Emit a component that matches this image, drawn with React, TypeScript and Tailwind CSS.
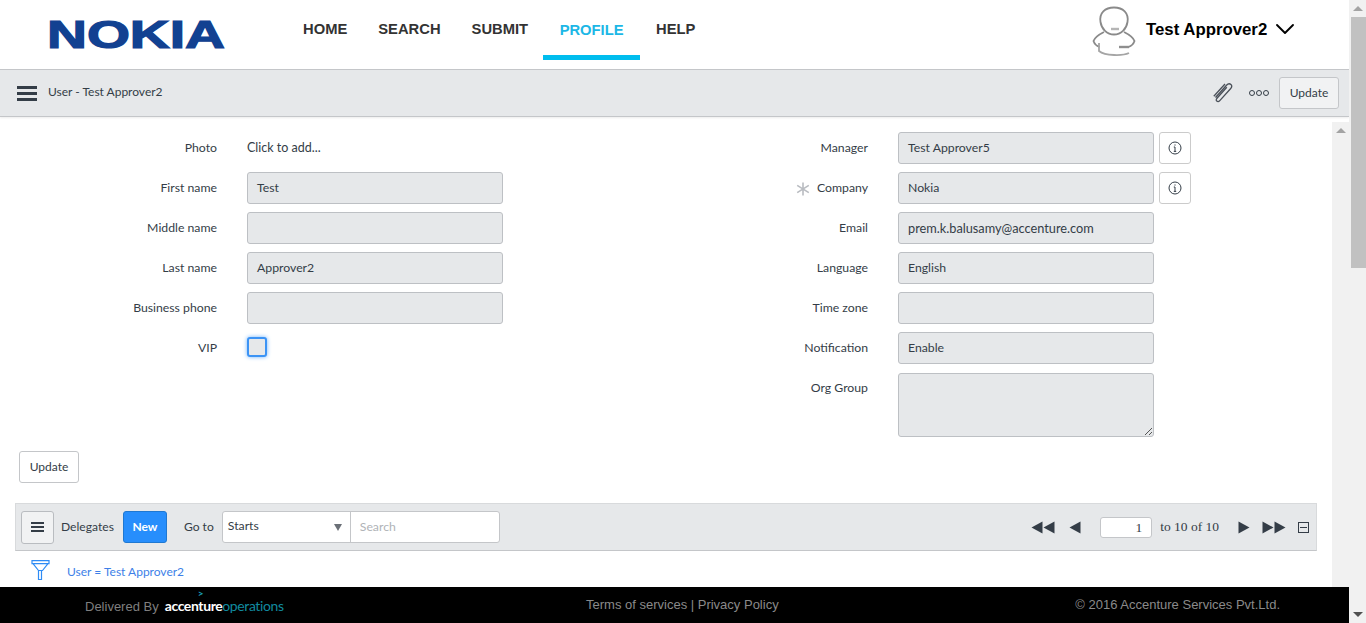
import { ChevronDown } from 'lucide-react';

const labelFont = "font-['Lato',sans-serif]";

const Field = ({ label, value, required, wide }: { label: string; value?: string; required?: boolean; wide?: boolean }) => (
  <div className="flex h-8 items-center mb-2">
    <div className="w-[121px] shrink-0 flex justify-end items-center text-[12.25px] text-[#343d47]">
      {required && (
        <svg width="14" height="14" viewBox="0 0 14 14" className="mr-[7px] mt-[1px]" stroke="#b9bcc1" strokeWidth="1.6">
          <path d="M7 0.5v13M1.2 3.4l11.6 7.2M12.8 3.4 1.2 10.6" />
        </svg>
      )}
      {label}
    </div>
    <div className={`ml-[30px] w-[256px] h-8 shrink-0 rounded-[3px] border border-[#bdc0c4] bg-[#e6e8ea] px-[9px] pt-[1px] flex items-center text-[#343d47] ${wide ? 'text-[12.75px]' : 'text-[12.25px]'}`}>
      {value}
    </div>
  </div>
);

const InfoButton = () => (
  <div className="ml-[5px] w-8 h-8 shrink-0 rounded-[3px] border border-[#cbcbcb] bg-white flex items-center justify-center">
    <svg width="14" height="14" viewBox="0 0 14 14" fill="none" stroke="#343d47" strokeWidth="1">
      <circle cx="7" cy="7" r="6" />
      <path d="M7 6v4.2M5.8 10.4h2.4M5.8 6h1.2" />
      <path d="M7 3.4v1.2" />
    </svg>
  </div>
);

const Triangle = ({ dir }: { dir: 'left' | 'right' }) => (
  <svg width="12" height="13" viewBox="0 0 12 13" fill="#343d47">
    <path d={dir === 'left' ? 'M0.5 6.5L11.5 0.5V12.5Z' : 'M11.5 6.5L0.5 0.5V12.5Z'} />
  </svg>
);

export default function App() {
  return (
    <div className={`relative flex h-[623px] w-[1366px] overflow-hidden bg-white ${labelFont}`}>
      <div className="flex w-[1349px] flex-col">
        {/* Header */}
        <div className="h-[69px] flex items-start relative bg-white">
          <svg width="180" height="50" viewBox="0 0 180 50" className="ml-[47px] mt-[6px]">
            <text
              x="0"
              y="41.5"
              textLength="178"
              lengthAdjust="spacingAndGlyphs"
              fontFamily="Liberation Sans, sans-serif"
              fontWeight="700"
              fontSize="38"
              fill="#124191"
              stroke="#124191"
              strokeWidth="1.2"
            >
              NOKIA
            </text>
          </svg>
          <nav className="ml-[59px] flex font-['Liberation_Sans',sans-serif] font-bold text-[14.75px] text-[#333]">
            <a className="h-[60px] pl-[17px] pr-[15px] pt-[18px]">HOME</a>
            <a className="h-[60px] pl-[16px] pr-[15.5px] pt-[18px]">SEARCH</a>
            <a className="h-[60px] pl-[15.5px] pr-[15px] pt-[18px]">SUBMIT</a>
            <a className="h-[60px] w-[97px] text-center pt-[19px] text-[#1cb7e6] border-b-[5px] border-[#00bdee]">PROFILE</a>
            <a className="h-[60px] pl-[16px] pt-[18px]">HELP</a>
          </nav>
          <div className="absolute left-[1092px] top-[5px] flex items-center">
            <svg width="48" height="52" viewBox="0 0 48 52" fill="none" stroke="#8a8a8a" strokeWidth="1.8">
              <path d="M8.5 17C7 8 13 2.5 22 2.5S37 8 35.5 17C34.5 24 29 29.5 22 29.5S9.5 24 8.5 17Z" />
              <path d="M12 27c-4 2-9 5-10.500 9 1 3 3 5 6 6M32 27c4 2 9 5 10.500 9-1 3-3 5-6 6" />
              <path d="M7 38v8c6 5 24 5 30 2" stroke="#a5a5a5" />
              <path d="M19 24h8" strokeWidth="2.4" stroke="#b5b5b5" />
              <path d="M27 42h10" strokeWidth="2.4" stroke="#8f8f8f" />
            </svg>
            <span className="ml-[6px] font-['Liberation_Sans',sans-serif] font-bold text-[16.800px] text-black -mt-[3px]">Test Approver2</span>
            <ChevronDown size={32} strokeWidth={1.4} className="ml-[2px] -mt-[4px] text-black" />
          </div>
        </div>

        {/* Title bar */}
        <div className="h-[48px] shrink-0 flex items-center border-y border-[#c4c6c9] bg-[#e6e8ea] pl-[17px] pr-[10px] shadow-[0_1px_2px_rgba(0,0,0,0.08)]">
          <div className="flex flex-col gap-[3px] w-[20px]">
            <div className="h-[3px] bg-[#343d47]" />
            <div className="h-[3px] bg-[#343d47]" />
            <div className="h-[3px] bg-[#343d47]" />
          </div>
          <span className="ml-[11px] pb-[2px] text-[12px] text-[#343d47]">User - Test Approver2</span>
          <div className="ml-auto flex items-center">
            <svg width="22" height="22" viewBox="0 0 22 22" fill="none" stroke="#4a5059" strokeWidth="1.3">
              <path d="M3.5 15.500 14.500 3.200c1.400-1.500 3.400-1.600 4.400-.7 1 .9 1 2.700-.4 4.300L7.800 18.600c-.9 1-2.200 1.200-3 .5-.8-.7-.7-1.900.2-2.900l9.800-11" />
              <path d="M1.800 14.200 13 2" />
            </svg>
            <div className="ml-[15px] flex gap-[1px]">
              <div className="w-[6px] h-[6px] rounded-full border border-[#343d47]" />
              <div className="w-[6px] h-[6px] rounded-full border border-[#343d47]" />
              <div className="w-[6px] h-[6px] rounded-full border border-[#343d47]" />
            </div>
            <button className="ml-[10px] h-[32px] w-[60px] rounded-[3px] border border-[#c4c6c9] bg-[#f1f2f3] text-[12px] text-[#343d47]">Update</button>
          </div>
        </div>

        {/* Body */}
        <div className="flex flex-1 min-h-0">
          <div className="flex-1 min-w-0 pt-[15px] overflow-hidden">
            <div className="flex">
              <div className="ml-[96px] w-[651px] shrink-0">
                <div className="flex h-8 items-center mb-2">
                  <div className="w-[121px] text-right text-[12.25px] text-[#343d47]">Photo</div>
                  <div className="ml-[30px] text-[12.5px] text-[#343d47]">Click to add...</div>
                </div>
                <Field label="First name" value="Test" />
                <Field label="Middle name" />
                <Field label="Last name" value="Approver2" />
                <Field label="Business phone" />
                <div className="flex h-8 items-center">
                  <div className="w-[121px] text-right text-[12.25px] text-[#343d47]">VIP</div>
                  <div className="ml-[30px] -mt-[2px] w-5 h-5 rounded-[3px] border-2 border-[#3b93f5] bg-[#e6e8ea] shadow-[0_0_4px_#6fb2fb]" />
                </div>
              </div>
              <div>
                <div className="flex">
                  <Field label="Manager" value="Test Approver5" />
                  <InfoButton />
                </div>
                <div className="flex">
                  <Field label="Company" value="Nokia" required />
                  <InfoButton />
                </div>
                <Field label="Email" value="prem.k.balusamy@accenture.com" wide />
                <Field label="Language" value="English" />
                <Field label="Time zone" />
                <Field label="Notification" value="Enable" />
                {/* margins collapse with the field's mb-2, so 9px gives the extra pixel */}
                <div className="flex items-start mt-[9px]">
                  <div className="w-[121px] text-right text-[12.25px] text-[#343d47] pt-[6px]">Org Group</div>
                  <div className="relative ml-[30px] w-[256px] h-[64px] rounded-[3px] border border-[#bdc0c4] bg-[#e6e8ea]">
                    <svg width="8" height="8" viewBox="0 0 8 8" className="absolute right-[1px] bottom-[1px]" stroke="#555" strokeWidth="1">
                      <path d="M1 8 8 1M5 8l3-3" />
                    </svg>
                  </div>
                </div>
              </div>
            </div>
            <button className="ml-[19px] mt-[14px] h-[32px] w-[60px] rounded-[3px] border border-[#c4c6c9] bg-white text-[12px] text-[#343d47] block">Update</button>

            {/* Related list */}
            <div className="ml-[15px] mt-[20px] mr-[15px] h-[48px] flex items-center border border-[#d8dadc] border-b-[#c4c6c9] bg-[#e6e8ea] pl-[5px] pr-[7px]">
              <div className="w-[33px] h-[33px] rounded-[3px] border border-[#b9bcc0] bg-[#f1f2f3] flex flex-col gap-[2px] items-center justify-center">
                <div className="h-[2px] w-[13px] bg-[#343d47]" />
                <div className="h-[2px] w-[13px] bg-[#343d47]" />
                <div className="h-[2px] w-[13px] bg-[#343d47]" />
              </div>
              <span className="ml-[7px] text-[12.1px] text-[#343d47]">Delegates</span>
              <button className="ml-[9px] w-[44px] h-[32px] rounded-[3px] border border-[#1f78d1] bg-[#278efc] text-[12px] font-bold text-white">New</button>
              <span className="ml-[17px] text-[12.1px] text-[#343d47]">Go to</span>
              <div className="ml-[8px] w-[278px] h-[32px] flex rounded-[3px] border border-[#c4c6c9] bg-white">
                <div className="w-[128px] flex items-center justify-between border-r border-[#c4c6c9] pl-[5px] pr-[8px] text-[12.25px] text-[#343d47]">
                  <span className="pb-[2px]">Starts</span>
                  <div className="w-0 h-0 border-x-[4px] border-x-transparent border-t-[7px] border-t-[#6b7077]" />
                </div>
                <span className="pl-[9px] flex items-center text-[12.25px] text-[#b0b3b7]">Search</span>
              </div>
              <div className="ml-auto flex items-center">
                <div className="flex"><Triangle dir="left" /><Triangle dir="left" /></div>
                <div className="ml-[14px]"><Triangle dir="left" /></div>
                <div className="ml-[19px] w-[52px] h-[21px] rounded-[3px] border border-[#c4c6c9] bg-white text-right pr-[9px] font-['Liberation_Serif',serif] text-[13.500px] leading-[19px] text-[#343d47]">1</div>
                <span className="ml-[8px] font-['Liberation_Serif',serif] text-[13.500px] text-[#343d47]">to 10 of 10</span>
                <div className="ml-[19px]"><Triangle dir="right" /></div>
                <div className="ml-[12px] flex"><Triangle dir="right" /><Triangle dir="right" /></div>
                <div className="ml-[12px] w-[11px] h-[11px] border border-[#343d47] flex items-center justify-center">
                  <div className="w-[7px] h-[1px] bg-[#343d47]" />
                </div>
              </div>
            </div>
            <div className="ml-[31px] mt-[9px] flex items-center">
              <svg width="20" height="21" viewBox="0 0 20 21" fill="none" stroke="#2f8cf5" strokeWidth="1.2">
                <path d="M1 .6h17v3H1ZM2 3.600 7.500 10.500h4L17 3.600M7.500 10.500v9h3v-9" />
              </svg>
              <span className="ml-[16px] mt-[2px] text-[12px] text-[#3d7fe8]">User = Test Approver2</span>
            </div>
          </div>
          <div className="w-[17px] shrink-0 mt-[5px] bg-[#f1f1f1]">
            <div className="h-[17px] flex items-center justify-center">
              <div className="w-0 h-0 border-x-[5px] border-x-transparent border-b-[5px] border-b-[#a3a3a3]" />
            </div>
          </div>
        </div>

        {/* Footer */}
        <div className="h-[36px] shrink-0 bg-black flex items-center font-['Liberation_Sans',sans-serif] text-[13px] text-[#8a8a8a]">
          <span className="ml-[85px] mt-[3px] text-[#7f7f7f]">Delivered By</span>
          <span className={`relative ml-[6px] text-[14px] tracking-[-0.4px] ${labelFont}`}>
            <span className="absolute left-[33px] -top-[9px] text-[10px] font-bold text-[#1a9fb5]">&gt;</span>
            <span className="font-bold text-white">accenture</span>
            <span className="text-[#118a9f]">operations</span>
          </span>
          <span className="absolute left-[586px]">Terms of services | Privacy Policy</span>
          <span className="ml-auto mr-[69px]">© 2016 Accenture Services Pvt.Ltd.</span>
        </div>
      </div>

      {/* Page scrollbar */}
      <div className="w-[17px] shrink-0 bg-[#f1f1f1] flex flex-col">
        <div className="h-[17px] flex items-center justify-center">
          <div className="w-0 h-0 border-x-[5px] border-x-transparent border-b-[5px] border-b-[#a3a3a3]" />
        </div>
        <div className="ml-[2px] h-[251px] bg-[#c1c1c1]" />
        <div className="mt-auto h-[17px] flex items-center justify-center">
          <div className="w-0 h-0 border-x-[5px] border-x-transparent border-t-[5px] border-t-[#505050]" />
        </div>
      </div>
    </div>
  );
}
